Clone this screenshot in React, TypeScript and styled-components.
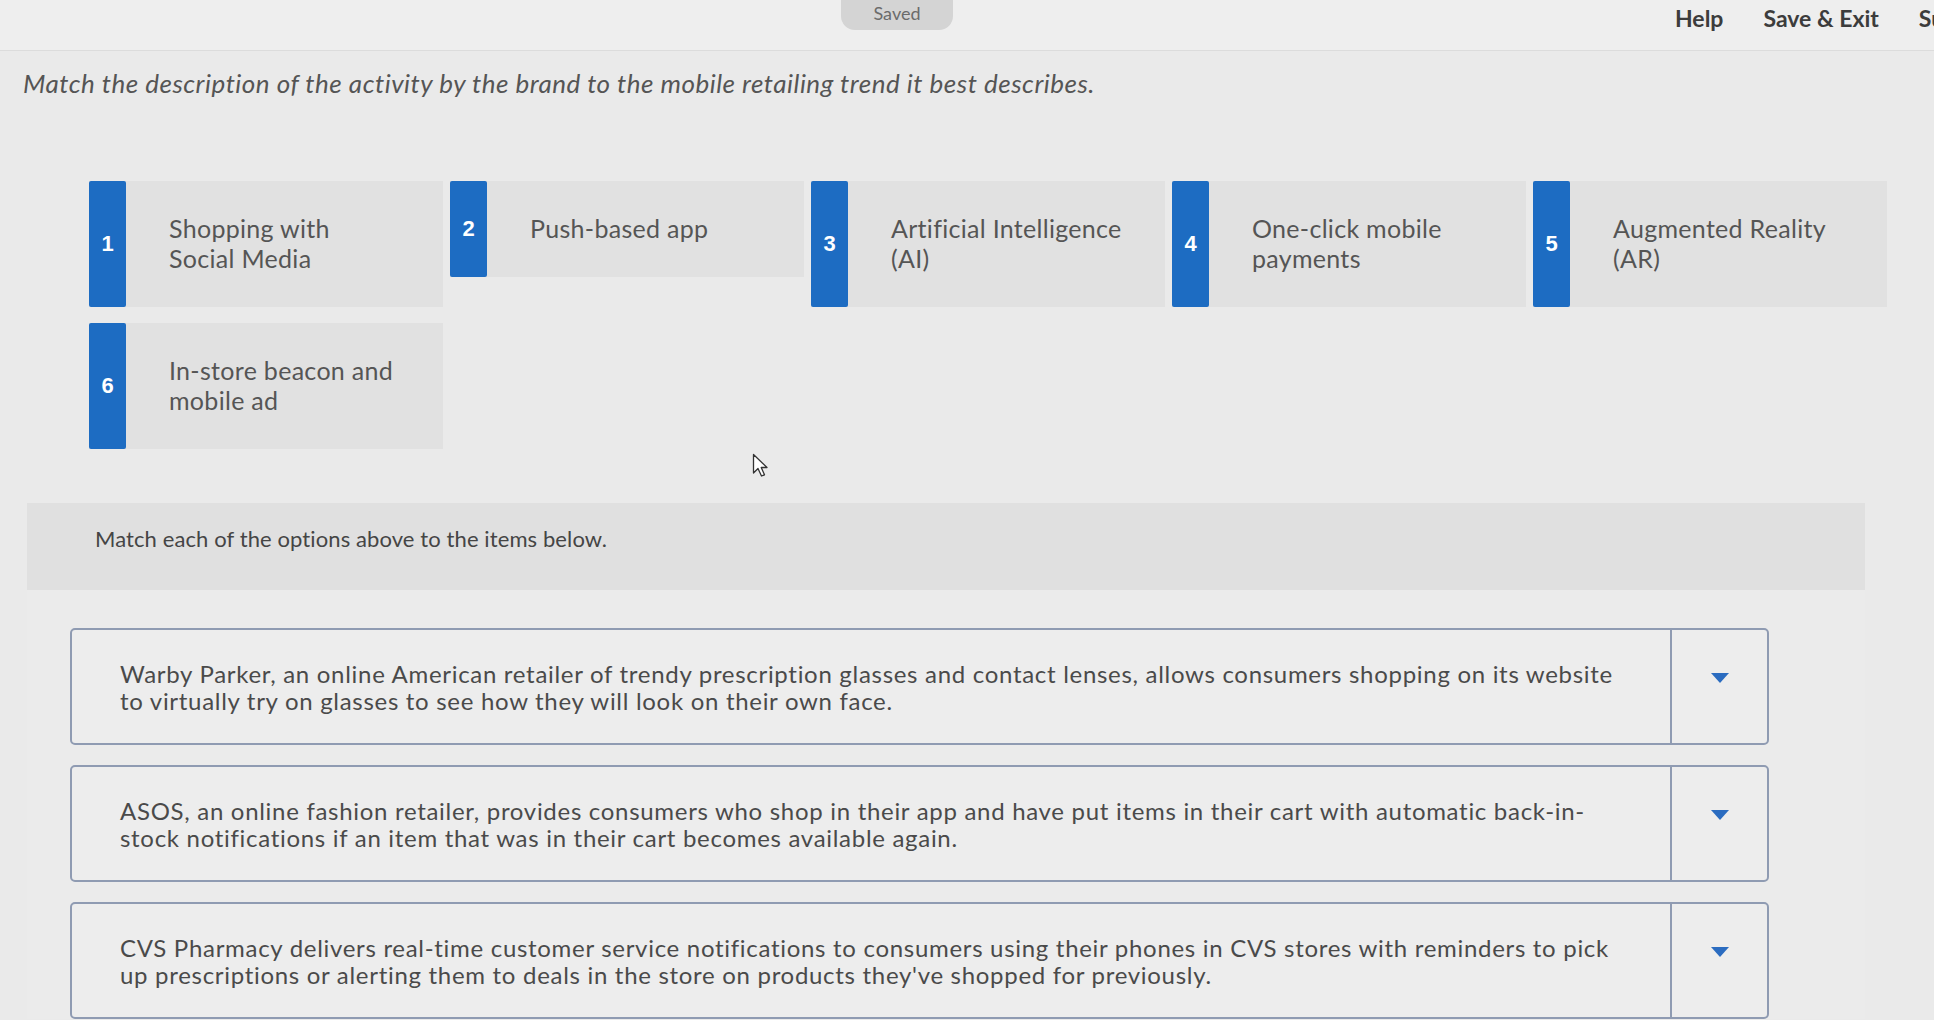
import React from 'react';
import styled, { createGlobalStyle } from 'styled-components';

const Global = createGlobalStyle`
  html, body { margin: 0; padding: 0; background: #eaeaea; overflow: hidden; }
  body { font-family: Lato, "Liberation Sans", Arial, sans-serif; }
  * { box-sizing: border-box; }
`;

const Page = styled.div`
  position: relative;
  width: 1934px;
  height: 1020px;
  overflow: hidden;
  background: #eaeaea;
`;

const Header = styled.header`
  display: flex;
  align-items: flex-start;
  height: 51px;
  background: #eeeeee;
  border-bottom: 1px solid #dcdcdc;
`;

const SavedPill = styled.div`
  flex: none;
  margin-left: 841px;
  width: 112px;
  height: 30px;
  border-radius: 0 0 14px 14px;
  background: #d4d4d4;
  color: #6b6b6b;
  font-size: 18px;
  display: flex;
  align-items: center;
  justify-content: center;
  padding-bottom: 4px;
`;

const Actions = styled.nav`
  flex: none;
  margin-left: 722px;
  display: flex;
  gap: 40px;
  padding-top: 4px;
  white-space: nowrap;
`;

const ActionLink = styled.span`
  font-size: 23px;
  font-weight: 700;
  color: #3c3c3c;
`;

const Prompt = styled.p`
  margin: 17px 0 0 23px;
  font-size: 26px;
  line-height: 30px;
  letter-spacing: 0.5px;
  font-style: italic;
  color: #555;
`;

const Cards = styled.div`
  margin: 83px 0 0 89px;
  width: 1798px;
  display: flex;
  flex-wrap: wrap;
  align-items: flex-start;
  column-gap: 7px;
  row-gap: 16px;
`;

const Card = styled.div`
  width: 354px;
  display: flex;
  background: #e1e1e1;
`;

const Strip = styled.div`
  width: 37px;
  flex: none;
  background: #1d6cc2;
  border-radius: 2px;
  color: #fff;
  font-family: "Liberation Sans", Arial, sans-serif;
  font-weight: 700;
  font-size: 22px;
  display: flex;
  align-items: center;
  justify-content: center;
`;

const CardText = styled.div`
  padding: 32px 12px 34px 43px;
  font-size: 25px;
  line-height: 30px;
  letter-spacing: 0.3px;
  color: #555;
`;

const Line = styled.span`
  display: block;
  white-space: nowrap;
`;

const Cursor = styled.svg`
  position: absolute;
  left: 752px;
  top: 453px;
`;

const Panel = styled.section`
  margin: 54px 0 0 27px;
  width: 1838px;
`;

const PanelHead = styled.div`
  height: 87px;
  padding: 22px 68px 0;
  background: #e0e0e0;
  font-size: 22px;
  letter-spacing: 0.1px;
  color: #454545;
`;

const PanelBody = styled.div`
  background: #ebebeb;
  padding: 38px 96px 0 43px;
  display: flex;
  flex-direction: column;
  gap: 20px;
`;

const Box = styled.div`
  display: flex;
  min-height: 117px;
  border: 2px solid #8f9bb2;
  border-radius: 5px;
  background: #ededed;
`;

const BoxText = styled.div`
  flex: 1;
  padding: 30px 30px 28px 48px;
  font-size: 24px;
  line-height: 27px;
  letter-spacing: 0.7px;
  color: #4a4a4a;
`;

const DropZone = styled.div`
  width: 97px;
  flex: none;
  border-left: 2px solid #8f9bb2;
  display: flex;
  justify-content: center;
  padding-top: 43px;
`;

const Caret = styled.span`
  width: 0;
  height: 0;
  border-left: 9px solid transparent;
  border-right: 9px solid transparent;
  border-top: 10px solid #2b6cc0;
`;

const trends = [
  { n: 1, lines: ['Shopping with', 'Social Media'] },
  { n: 2, lines: ['Push-based app'] },
  { n: 3, lines: ['Artificial Intelligence', '(AI)'] },
  { n: 4, lines: ['One-click mobile', 'payments'] },
  { n: 5, lines: ['Augmented Reality', '(AR)'] },
  { n: 6, lines: ['In-store beacon and', 'mobile ad'] },
];

const items = [
  [
    'Warby Parker, an online American retailer of trendy prescription glasses and contact lenses, allows consumers shopping on its website',
    'to virtually try on glasses to see how they will look on their own face.',
  ],
  [
    'ASOS, an online fashion retailer, provides consumers who shop in their app and have put items in their cart with automatic back-in-',
    'stock notifications if an item that was in their cart becomes available again.',
  ],
  [
    'CVS Pharmacy delivers real-time customer service notifications to consumers using their phones in CVS stores with reminders to pick',
    "up prescriptions or alerting them to deals in the store on products they've shopped for previously.",
  ],
];

export default function App() {
  return (
    <Page>
      <Global />
      <Header>
        <SavedPill>Saved</SavedPill>
        <Actions>
          <ActionLink>Help</ActionLink>
          <ActionLink>Save &amp; Exit</ActionLink>
          <ActionLink>Submit</ActionLink>
        </Actions>
      </Header>
      <Prompt>Match the description of the activity by the brand to the mobile retailing trend it best describes.</Prompt>
      <Cards>
        {trends.map((t) => (
          <Card key={t.n}>
            <Strip>{t.n}</Strip>
            <CardText>
              {t.lines.map((l) => (
                <Line key={l}>{l}</Line>
              ))}
            </CardText>
          </Card>
        ))}
      </Cards>
      <Panel>
        <PanelHead>Match each of the options above to the items below.</PanelHead>
        <PanelBody>
          {items.map((lines, i) => (
            <Box key={i}>
              <BoxText>
                {lines.map((l) => (
                  <Line key={l}>{l}</Line>
                ))}
              </BoxText>
              <DropZone>
                <Caret />
              </DropZone>
            </Box>
          ))}
        </PanelBody>
      </Panel>
      <Cursor width="18" height="26" viewBox="0 0 18 26">
        <path d="M1.5 1.5 L1.5 20 L6 15.5 L9.5 23 L12.5 21.8 L9.2 14.5 L15 14.5 Z" fill="#fff" stroke="#333" strokeWidth="1.3" strokeLinejoin="round" />
      </Cursor>
    </Page>
  );
}
